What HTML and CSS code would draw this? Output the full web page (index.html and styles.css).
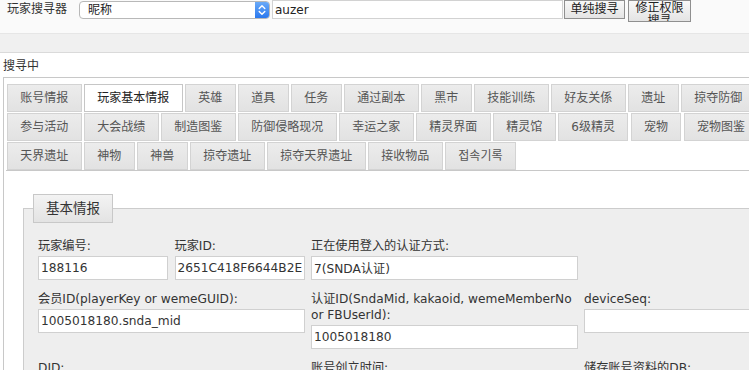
FILE: index.html
```html
<!DOCTYPE html>
<html lang="zh">
<head>
<meta charset="utf-8">
<title>玩家搜寻器</title>
<link rel="stylesheet" href="styles.css">
</head>
<body>
<div class="page">
  <header class="topbar">
    <span class="title">玩家搜寻器</span>
    <div class="select">
      <span class="select-text">昵称</span>
      <span class="stepper"><svg width="14" height="16" viewBox="0 0 14 16"><path d="M4.2 6.6 L7 3.8 L9.8 6.6 M4.2 9.4 L7 12.2 L9.8 9.4" fill="none" stroke="#fff" stroke-width="1.4" stroke-linecap="round" stroke-linejoin="round"/></svg></span>
    </div>
    <input class="query" type="text" value="auzer">
    <div class="btn" role="button">单纯搜寻</div>
    <div class="btn btn-wrap" role="button">修正权限搜寻</div>
  </header>
  <div class="band"></div>
  <div class="status">搜寻中</div>
  <div class="tabs">
    <ul class="nav">
      <li>账号情报</li>
      <li class="active">玩家基本情报</li>
      <li>英雄</li>
      <li>道具</li>
      <li>任务</li>
      <li>通过副本</li>
      <li>黑市</li>
      <li>技能训练</li>
      <li>好友关係</li>
      <li>遗址</li>
      <li>掠夺防御</li>
      <li>参与活动</li>
      <li>大会战绩</li>
      <li>制造图鉴</li>
      <li>防御侵略现况</li>
      <li>幸运之家</li>
      <li>精灵界面</li>
      <li>精灵馆</li>
      <li>6级精灵</li>
      <li>宠物</li>
      <li>宠物图鉴</li>
      <li>天界遗址</li>
      <li>神物</li>
      <li>神兽</li>
      <li>掠夺遗址</li>
      <li>掠夺天界遗址</li>
      <li>接收物品</li>
      <li>접속기록</li>
    </ul>
    <div class="panel">
      <fieldset class="box">
        <legend>基本情报</legend>
        <div class="grid">
          <div class="field">
            <label>玩家编号:</label>
            <input type="text" value="188116">
          </div>
          <div class="field">
            <label>玩家ID:</label>
            <input type="text" value="2651C418F6644B2E">
          </div>
          <div class="field span2">
            <label>正在使用登入的认证方式:</label>
            <input type="text" value="7(SNDA认证)">
          </div>
          <div class="field span2 row-start">
            <label>会员ID(playerKey or wemeGUID):</label>
            <input type="text" value="1005018180.snda_mid">
          </div>
          <div class="field span2">
            <label>认证ID(SndaMid, kakaoid, wemeMemberNo or FBUserId):</label>
            <input type="text" value="1005018180">
          </div>
          <div class="field span2">
            <label>deviceSeq:</label>
            <input type="text" value="">
          </div>
          <div class="field span2">
            <label>DID:</label>
            <input type="text" value="">
          </div>
          <div class="field span2">
            <label>账号创立时间:</label>
            <input type="text" value="">
          </div>
          <div class="field span2">
            <label>储存账号资料的DB:</label>
            <input type="text" value="">
          </div>
        </div>
      </fieldset>
    </div>
  </div>
</div>
</body>
</html>
```
FILE: styles.css
```css
html, body {
  margin: 0;
  padding: 0;
  background: #fff;
}
body {
  font-family: "DejaVu Sans", "Noto Sans CJK SC", sans-serif;
  font-size: 12px;
  color: #333;
}
.page {
  width: 749px;
  height: 370px;
  overflow: hidden;
}

/* top search bar */
.topbar {
  height: 33px;
  background: #fafafa;
  display: flex;
  align-items: flex-start;
}
.title {
  margin: 1px 0 0 7px;
  line-height: 16px;
  color: #333;
}
.select {
  margin: 1px 0 0 12px;
  width: 191px;
  height: 18px;
  box-sizing: border-box;
  border: 1px solid #b8b8b8;
  border-radius: 4px;
  background: #fff;
  display: flex;
  align-items: stretch;
  padding-left: 8px;
}
.select-text {
  line-height: 16px;
  color: #222;
}
.stepper {
  margin-left: auto;
  width: 14px;
  background: linear-gradient(#6aaaf8, #2a78ee);
  border-radius: 0 3px 3px 0;
  display: flex;
}
.query {
  margin: 0 0 0 2px;
  width: 291px;
  height: 19px;
  box-sizing: border-box;
  border: 1px solid #d2d2d2;
  padding: 0 2px;
  font: 12px "DejaVu Sans", sans-serif;
  color: #222;
  background: #fff;
  outline: none;
}
.btn {
  margin-left: 1px;
  width: 61px;
  height: 19px;
  box-sizing: border-box;
  border: 1px solid #8f8f8f;
  background: linear-gradient(#f8f8f8, #e4e4e4);
  color: #222;
  text-align: center;
  line-height: 17px;
  font-size: 12px;
}
.btn-wrap {
  margin-left: 3px;
  width: 63px;
  height: 22px;
  padding: 1px 6px 0;
  line-height: 13px;
  overflow: hidden;
}

.band {
  height: 18px;
  background: #f0f0f0;
  border-top: 1px solid #e6e6e6;
  border-bottom: 1px solid #dadada;
}
.status {
  margin: 5px 0 0 3px;
  line-height: 16px;
  color: #333;
}

/* tabs */
.tabs {
  margin: 3px 0 0 3px;
  width: 790px;
  border: 1px solid #c8c8c8;
  padding: 2px;
}
.nav {
  list-style: none;
  margin: 0;
  padding: 3px 0 0 1px;
  display: flex;
  flex-wrap: wrap;
  border-bottom: 1px solid #c8c8c8;
}
.nav li {
  margin: 1px 2.4px 0 0;
  height: 28px;
  box-sizing: border-box;
  border: 1px solid #d3d3d3;
  background: linear-gradient(#ececec, #e2e2e2);
  padding: 0 12.3px;
  line-height: 26px;
  color: #555;
  white-space: nowrap;
}
.nav li.active {
  background: #fff;
  border-color: #c6c6c6;
  color: #212121;
}

.panel {
  padding: 23px 0 0 17px;
}
.box {
  margin: 0;
  width: 760px;
  min-width: 0;
  border: 1px solid #cccccc;
  background: #eeeeee;
  padding: 0 0 20px 9px;
}
.box legend {
  padding: 0 12px;
  height: 29px;
  box-sizing: border-box;
  line-height: 27px;
  border: 1px solid #c8c8c8;
  background: linear-gradient(#f3f3f3, #e3e3e3);
  font-size: 13.5px;
  color: #333;
}
.grid {
  display: grid;
  grid-template-columns: repeat(6, 130px);
  column-gap: 6.5px;
  row-gap: 11px;
  padding: 15px 0 0 5px;
  align-items: start;
}
.span2 {
  grid-column: span 2;
}
.row-start {
  grid-column: 1 / span 2;
}
.field label {
  display: block;
  line-height: 16px;
  margin-bottom: 2px;
  font-size: 12.2px;
  color: #333;
}
.field input {
  display: block;
  width: 100%;
  height: 24px;
  box-sizing: border-box;
  margin: 0;
  border: 1px solid #d0d0d0;
  padding: 0 2px;
  font: 12.2px "DejaVu Sans", "Noto Sans CJK SC", sans-serif;
  color: #333;
  background: #fff;
  outline: none;
}
```
